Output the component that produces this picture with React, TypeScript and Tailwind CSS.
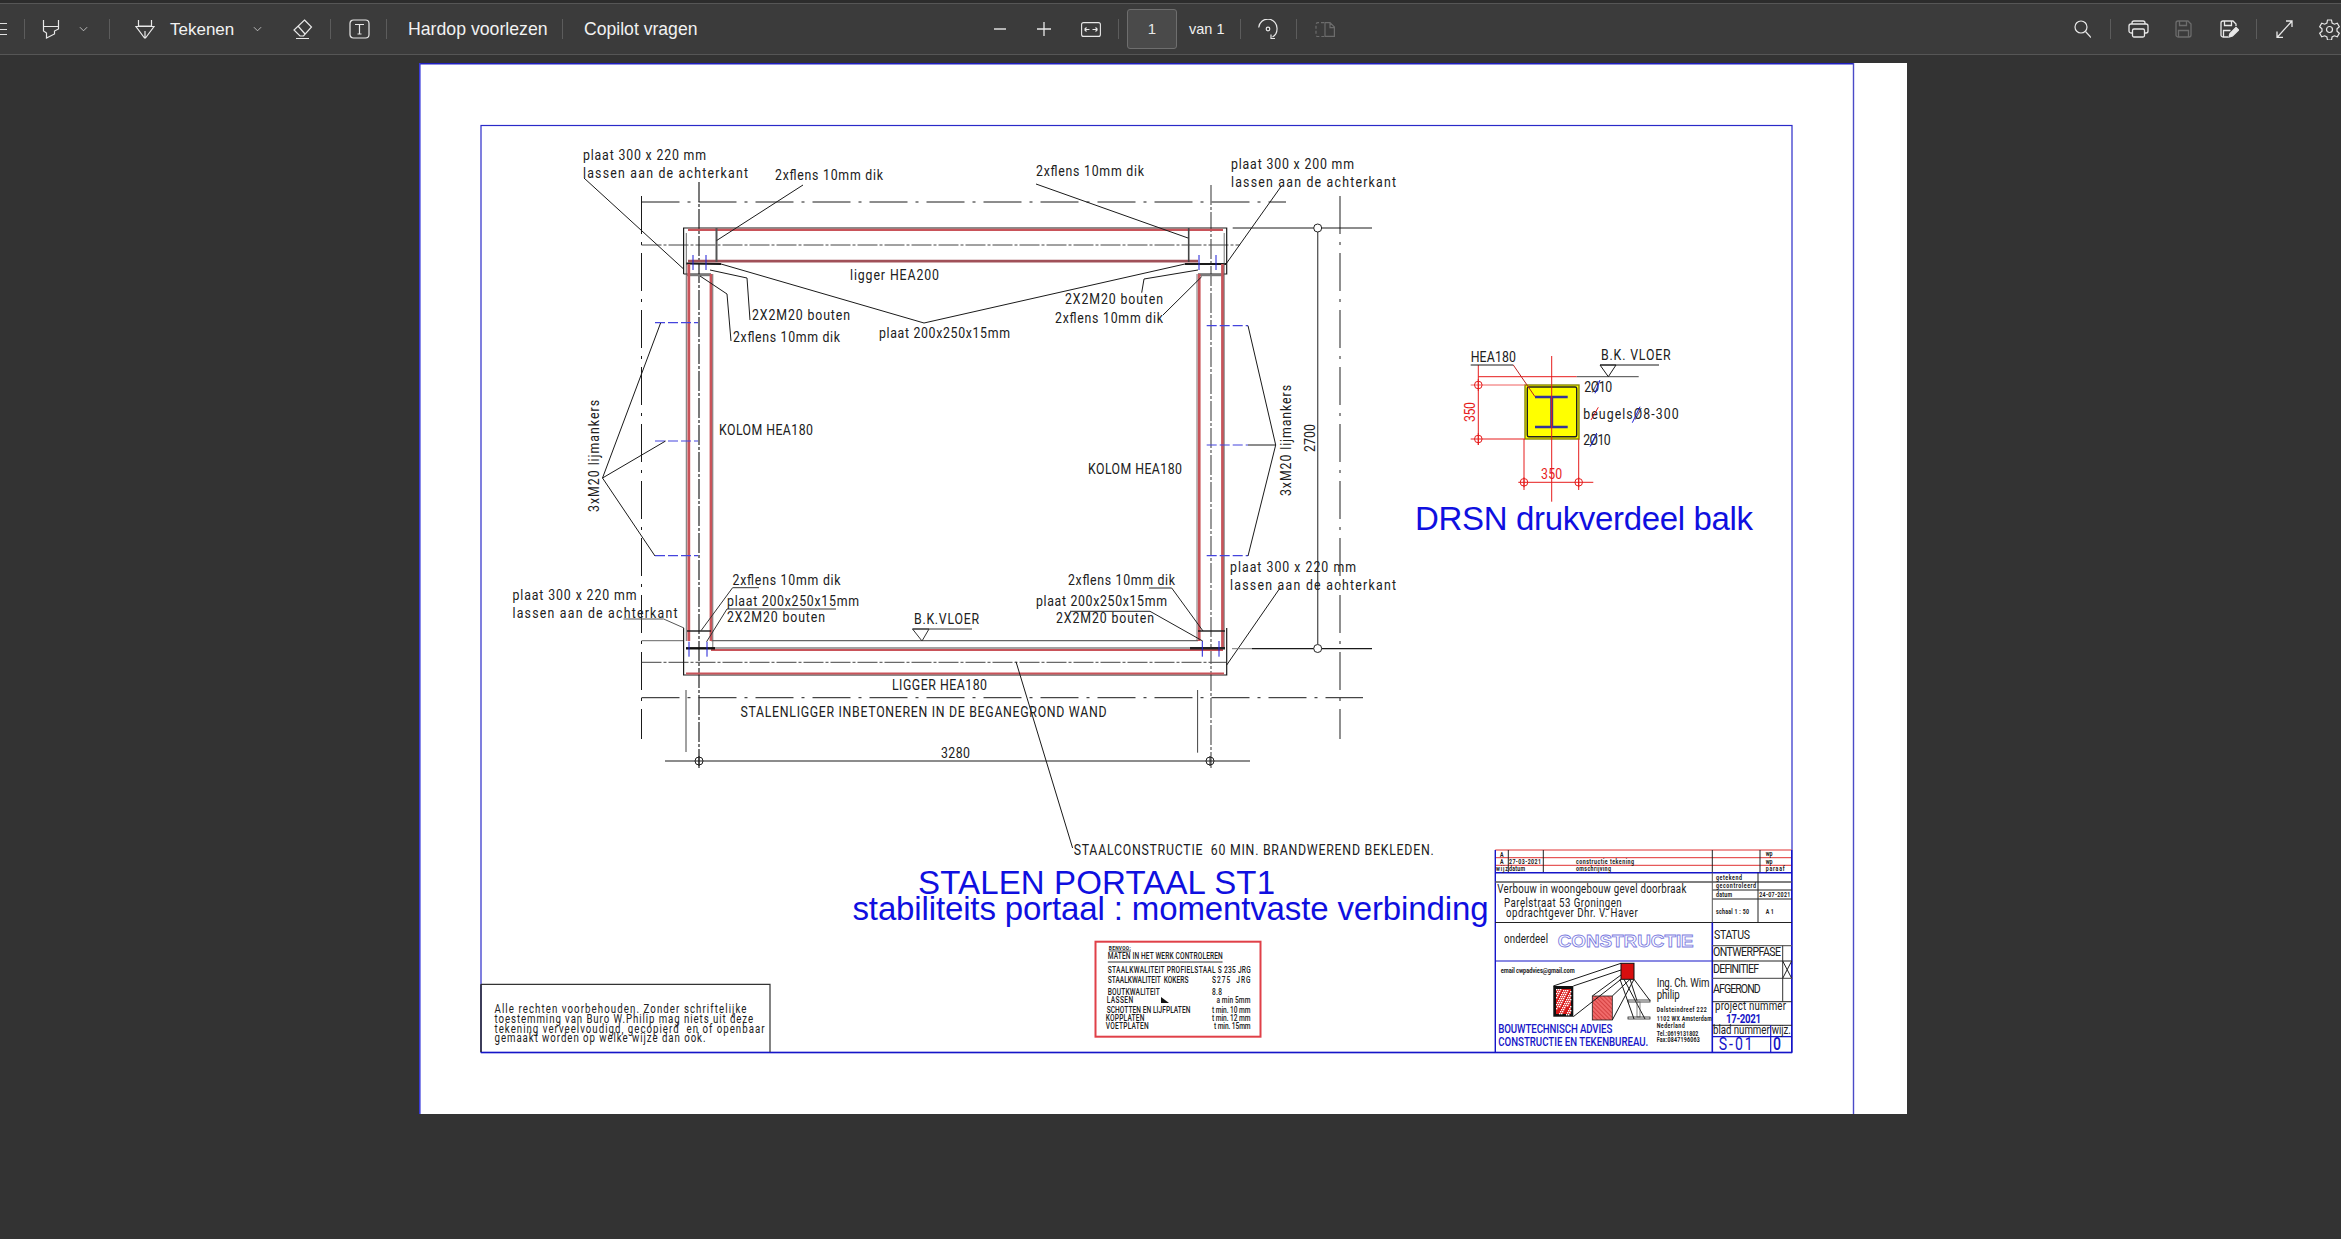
import React from "react";

const CAD = "Roboto, 'Liberation Sans', sans-serif";
const SX = 0.8;

type TP = { x: number; y: number; w?: number; s: string; size?: number; fill?: string; bold?: boolean; rot?: boolean; weight?: number; };
function T({ x, y, w, s, size = 14, fill = "#202020", bold, rot, weight }: TP) {
  return (
    <text
      x={0}
      y={0}
      transform={rot ? `translate(${x} ${y}) rotate(-90) scale(${SX} 1)` : `translate(${x} ${y}) scale(${SX} 1)`}
      textLength={w ? w / SX : undefined}
      lengthAdjust="spacing"
      fontFamily={CAD}
      fontSize={size * 1.1}
      fontWeight={weight ?? (bold ? 700 : 400)}
      fill={fill}
      xmlSpace="preserve"
    >
      {s}
    </text>
  );
}

function L({ p, c = "#1a1a1a", w = 1, d }: { p: string; c?: string; w?: number; d?: string }) {
  return <polyline points={p} fill="none" stroke={c} strokeWidth={w} strokeDasharray={d} />;
}

const RED = "#c9545a";
const BLUE = "#1d1dd6";
const DD = "38 8 3 8";
const CL = "20 2 3 2";

function Cross({ x, y, r = 4, c = "#222", v = 10 }: { x: number; y: number; r?: number; c?: string; v?: number }) {
  return (
    <g>
      <circle cx={x} cy={y} r={r} fill="none" stroke={c} strokeWidth={1} />
      <line x1={x} y1={y - v / 2} x2={x} y2={y + v / 2} stroke={c} strokeWidth={1} />
    </g>
  );
}

function Frame() {
  return (
    <g>
      {/* dash-dot grid */}
      <L p="641.5,202 1286,202" d={DD} />
      <L p="641.5,196 641.5,739" d={DD} />
      <L p="1340,196 1340,739" c="#555" w={1.3} d={DD} />
      <L p="641.5,697.7 1363,697.7" d={DD} />
      <L p="641.5,245 1240,245" c="#444" d={CL} />
      <L p="641.5,662.3 1226,662.3" c="#444" d={CL} />
      <L p="699,182 699,768" c="#222" w={1.2} d={CL} />
      <L p="1211,185 1211,768" c="#555" w={1.2} d={CL} />
      <L p="641.5,640.7 684,640.7" c="#666" />
      <L p="711,640.7 1198,640.7" c="#666" w={1.2} />

      {/* top beam */}
      <L p="683.6,274 683.6,228 1226.7,228 1226.7,274 1198,274" w={1.2} />
      <L p="683.6,274 711,274" w={1} />
      <L p="688,229.8 1223,229.8" c={RED} w={2.2} />
      <L p="688,261.2 1198,261.2" c="#a05058" w={2.8} />
      <L p="716.5,228 716.5,262" c="#555" w={2} />
      <L p="1188.7,228 1188.7,262" c="#444" w={1.6} />
      <L p="686,263.5 721,264" w={2} />
      <L p="1185,264 1226,264" w={2} />
      <L p="687,275.2 711,275.2" c="#777" w={2} />
      <L p="1198,275.2 1224,275.2" c="#777" w={2} />

      {/* columns */}
      <L p="686.3,233 686.3,641" c="#444" w={0.8} />
      <L p="688.8,264 688.8,641" c={RED} w={2.8} />
      <L p="711,274 711,641" c={RED} w={2.8} />
      <L p="712.8,274 712.8,648" c="#555" w={0.8} />
      <L p="1197,274 1197,641" c="#555" w={0.8} />
      <L p="1199.2,274 1199.2,641" c={RED} w={2.8} />
      <L p="1222.5,264 1222.5,649" c={RED} w={2.8} />
      <L p="1224.2,233 1224.2,649" c="#555" w={0.8} />

      {/* bottom beam */}
      <L p="683.6,628 683.6,675 1226.7,675 1226.7,628" w={1.2} />
      <L p="687,631 711,631" w={1.4} />
      <L p="1198,631 1225,631" w={1.4} />
      <L p="711,648 1190,648" c="#444" w={1.2} />
      <L p="711,650 1223,650" c={RED} w={2} />
      <L p="686,648.3 715,648.3" c="#111" w={2.4} />
      <L p="1190,648.3 1225,648.3" c="#222" w={2.4} />
      <L p="686,673.4 1224,673.4" c={RED} w={2} />

      {/* bolts */}
      <L p="693,255 693,270" c={BLUE} />
      <L p="706,255 706,270" c={BLUE} />
      <L p="1199,255 1199,270" c={BLUE} />
      <L p="1216,255 1216,270" c={BLUE} />
      <L p="689,641.7 689,656.7" c={BLUE} />
      <L p="707,641.7 707,656.7" c={BLUE} />
      <L p="1202.3,641 1202.3,656.7" c={BLUE} />
      <L p="1219,641 1219,656.7" c={BLUE} />

      {/* anchors */}
      <L p="655,322.7 698,322.7" c="#4444dd" w={1.2} d="10 3" />
      <L p="655,441 698,441" c="#4444dd" w={1.2} d="10 3" />
      <L p="655,555.7 698,555.7" c="#4444dd" w={1.2} d="10 3" />
      <L p="1206.7,325.7 1248,325.7" c="#4444dd" w={1.2} d="10 3" />
      <L p="1206.7,445 1248,445" c="#4444dd" w={1.2} d="10 3" />
      <L p="1206.7,555.7 1248,555.7" c="#4444dd" w={1.2} d="10 3" />
      <L p="660.6,323 602.5,478 665.6,441" />
      <L p="602.5,478 655,556" />
      <L p="1248,325.7 1275.7,445 1248,445" />
      <L p="1275.7,445 1248,556" />

      {/* leaders top */}
      <L p="584,178 683.6,269" />
      <L p="803,185 716.5,240.6" />
      <L p="721,264 924,323 1185,264" />
      <L p="710,270 747,278 750,320" />
      <L p="700,276 727,294 731,341" />
      <L p="1036,184 1188,238" />
      <L p="1280.7,187 1226,264" />
      <L p="1198,270 1144,279 1141.7,292.7" />
      <L p="1201.7,276.7 1163,315" />

      {/* leaders bottom */}
      <L p="623.5,619 663.7,619 684,628" c="#555" />
      <L p="759,587.7 732.6,587.7 701,630.7" c="#333" />
      <L p="836,609 727,609 706.6,641.7" c="#333" />
      <L p="1149,588 1171.7,588 1203,631" c="#222" />
      <L p="1070,611.3 1150,611.3 1202.7,641" c="#222" />
      <L p="1280,588 1226.7,665" />
      <L p="1016,661.7 1072.6,848" />

      {/* floor level */}
      <L p="912.5,629 972,629" c="#333" />
      <L p="912.5,629 929,629 922,641 912.5,629" c="#333" />

      {/* dimensions */}
      <L p="1232.7,228 1372,228" />
      <L p="1232,648.7 1252,648.7" c="#777" />
      <L p="1252,648.7 1372,648.7" w={1.2} />
      <L p="1317.7,232 1317.7,644" c="#555" w={1.3} />
      <circle cx={1317.7} cy={228} r={4} fill="white" stroke="#222" />
      <circle cx={1317.7} cy={648.5} r={4} fill="white" stroke="#222" />
      <L p="686,690 686,752" c="#444" />
      <L p="1197.6,690 1197.6,752.7" c="#444" />
      <L p="665,761 1250,761" w={1.2} />
      <Cross x={699} y={761} r={4} />
      <Cross x={1210} y={761} r={4} />

      <T x={583} y={160} w={123} s="plaat 300 x 220 mm" />
      <T x={583} y={178} w={165} s="lassen aan de achterkant" />
      <T x={775} y={180} w={108} s="2xflens 10mm dik" />
      <T x={1036} y={176} w={108} s="2xflens 10mm dik" />
      <T x={1231} y={169} w={123} s="plaat 300 x 200 mm" />
      <T x={1231} y={187} w={165} s="lassen aan de achterkant" />
      <T x={752} y={320} w={98} s="2X2M20 bouten" />
      <T x={733} y={342} w={107} s="2xflens 10mm dik" />
      <T x={850} y={280} w={89} s="ligger HEA200" />
      <T x={879} y={338} w={131} s="plaat 200x250x15mm" />
      <T x={719} y={435} w={94} s="KOLOM HEA180" />
      <T x={1065} y={304} w={98} s="2X2M20 bouten" />
      <T x={1055} y={323} w={108} s="2xflens 10mm dik" />
      <T x={1088} y={474} w={94} s="KOLOM HEA180" />
      <T x={598.6} y={512} w={112} s="3xM20 lijmankers" rot />
      <T x={1290.7} y={496} w={111} s="3xM20 lijmankers" rot />
      <T x={1315} y={452} w={28} s="2700" rot />
      <T x={512.5} y={600} w={124} s="plaat 300 x 220 mm" />
      <T x={512.5} y={618} w={165} s="lassen aan de achterkant" />
      <T x={732.6} y={585} w={108} s="2xflens 10mm dik" />
      <T x={727} y={605.7} w={132} s="plaat 200x250x15mm" />
      <T x={727} y={621.7} w={98} s="2X2M20 bouten" />
      <T x={1068} y={585} w={107} s="2xflens 10mm dik" />
      <T x={1036} y={606} w={131} s="plaat 200x250x15mm" />
      <T x={1056} y={623.3} w={98} s="2X2M20 bouten" />
      <T x={1230} y={572} w={126} s="plaat 300 x 220 mm" />
      <T x={1230} y={590} w={166} s="lassen aan de achterkant" />
      <T x={914} y={624} w={65} s="B.K.VLOER" />
      <T x={892} y={690} w={95} s="LIGGER HEA180" />
      <T x={740.5} y={717} w={366} s="STALENLIGGER INBETONEREN IN DE BEGANEGROND WAND" />
      <T x={941} y={758} w={29} s="3280" />
      <T x={1073.7} y={855} w={360} s="STAALCONSTRUCTIE  60 MIN. BRANDWEREND BEKLEDEN." />
    </g>
  );
}

function Section() {
  const R = "#e61c1c";
  return (
    <g>
      <rect x={1525} y={385} width={54} height={54} fill="#ffff00" stroke="#8a8a00" strokeWidth={1.4} />
      <rect x={1527.3} y={387} width={49.4} height={49.7} rx={1.5} fill="none" stroke="#222" strokeWidth={1.4} />
      <L p="1535,397 1567.7,397" c="#33339a" w={2.6} />
      <L p="1535,427 1567.7,427" c="#33339a" w={2.6} />
      <L p="1551.7,397 1551.7,427" c="#33339a" w={3} />
      <L p="1551.7,356 1551.7,501.7" c={R} />
      <L p="1470.7,385 1525,385" c="#f06060" />
      <L p="1470.7,439 1525,439" c={R} />
      <L p="1478.3,365 1478.3,445" c={R} />
      <L p="1478.3,376.7 1576.7,376.7" c={R} />
      <L p="1576.7,376.7 1638.7,376.7" c="#444" />
      <L p="1524,439 1524,490" c={R} />
      <L p="1578.7,439 1578.7,490" c={R} />
      <L p="1518.3,482.3 1593.3,482.3" c={R} />
      <Cross x={1478.3} y={385} c={R} r={3.8} v={12} />
      <Cross x={1478.3} y={439} c={R} r={3.8} v={12} />
      <Cross x={1524} y={482.3} c={R} r={3.8} v={10} />
      <Cross x={1578.7} y={482.3} c={R} r={3.8} v={10} />
      <L p="1470.7,365 1513.3,365" />
      <L p="1513.3,365 1535,396.7" c="#b22" />
      <L p="1600,365 1659,365" />
      <L p="1600,365 1616,365 1608.3,376.7 1600,365" />
      <T x={1470.7} y={362} w={45.3} s="HEA180" />
      <T x={1601} y={360} w={69.7} s="B.K. VLOER" />
      <T x={1584.3} y={391.7} w={28} s="2Ø10" />
      <T x={1583.3} y={419} w={95.3} s="beugelsØ8-300" />
      <T x={1583.3} y={445} w={27.4} s="2Ø10" />
      <L p="1595,393.3 1600,380" c={BLUE} />
      <L p="1591,420 1598.3,407.3" c={R} />
      <L p="1632.3,422.7 1640,406.7" c={BLUE} />
      <L p="1590,446.7 1596.7,433" c={BLUE} />
      <T x={1475.3} y={422} w={20} s="350" rot fill={R} />
      <T x={1541} y={479} w={21.3} s="350" fill={R} />
      <text x={1415} y={530} textLength={338} fontFamily="'Liberation Sans', sans-serif" fontSize={33} fill="#0f0fe0">DRSN drukverdeel balk</text>
      <text x={918} y={894} textLength={357} fontFamily="'Liberation Sans', sans-serif" fontSize={33} fill="#0f0fe0">STALEN PORTAAL ST1</text>
      <text x={852.5} y={920} textLength={636} fontFamily="'Liberation Sans', sans-serif" fontSize={33} fill="#0f0fe0">stabiliteits portaal : momentvaste verbinding</text>
    </g>
  );
}

function Notes() {
  const rows: [number, number, number, string][] = [
    [1107.8, 972.7, 143, "STAALKWALITEIT PROFIELSTAAL S 235 JRG"],
    [1107.8, 983.3, 80.6, "STAALKWALITEIT  KOKERS"],
    [1212, 983.3, 38.6, "S275  JRG"],
    [1107.8, 995, 52, "BOUTKWALITEIT"],
    [1212, 995, 10, "8.8"],
    [1106.7, 1003.3, 26.5, "LASSEN"],
    [1216.4, 1003.3, 34, "a min 5mm"],
    [1106.7, 1013.3, 83.7, "SCHOTTEN EN LIJFPLATEN"],
    [1212, 1013.3, 38.6, "t min. 10 mm"],
    [1105.7, 1021.3, 38.8, "KOPPLATEN"],
    [1212, 1021.3, 38.6, "t min. 12 mm"],
    [1105.7, 1029.3, 43, "VOETPLATEN"],
    [1214, 1029.3, 36.6, "t min. 15mm"],
  ];
  return (
    <g>
      <rect x={1095.5} y={941.7} width={165} height={95} fill="none" stroke="#e04048" strokeWidth={2} />
      <T x={1108.8} y={949.7} w={22} s="BENVOO:" size={5.5} bold />
      <L p="1108.8,951 1131,951" w={0.8} />
      <T x={1107.8} y={959.3} w={115} s="MATEN IN HET WERK CONTROLEREN" size={7.5} weight={500} />
      <L p="1107.8,962 1222.6,962" c="#333" />
      {rows.map((r, i) => (
        <T key={i} x={r[0]} y={r[1]} w={r[2]} s={r[3]} size={7.5} weight={500} />
      ))}
      <polygon points="1161,997 1169,1003 1161,1003" fill="#111" />

      <L p="481,984.3 770,984.3 770,1052" c="#333" w={1.2} />
      <L p="481,984.3 481,1052" c="#222" w={1.4} />
      <T x={494.5} y={1013.3} w={252} s="Alle rechten voorbehouden. Zonder schriftelijke" size={11} />
      <T x={494.5} y={1023.3} w={258.6} s="toestemming van Buro W.Philip mag niets uit deze" size={11} />
      <T x={494.5} y={1032.7} w={270} s="tekening verveelvoudigd, gecopierd  en of openbaar" size={11} />
      <T x={494.5} y={1041.7} w={211} s="gemaakt worden op welke wijze dan ook." size={11} />
    </g>
  );
}

function TitleBlock() {
  const dots: [number, number][] = [];
  for (let i = 0; i < 70; i++) {
    dots.push([1556 + ((i * 37) % 15), 989 + ((i * 53) % 26)]);
  }
  const BB = "#1515c8";
  return (
    <g>
      <defs>
        <pattern id="hatch" width="3" height="3" patternUnits="userSpaceOnUse" patternTransform="rotate(-45)">
          <rect width="3" height="3" fill="#f06a6a" />
          <line x1="0" y1="0" x2="0" y2="3" stroke="#b81818" strokeWidth="1" />
        </pattern>
      </defs>
      <L p="1495.3,857.7 1791.7,857.7" c="#e03030" />
      <L p="1495.3,865.3 1791.7,865.3" c="#e03030" />
      <L p="1495.3,850 1791.7,850" c="#e03030" />
      <L p="1495.3,850 1495.3,1052" c={BB} w={1.4} />
      <L p="1791.7,850 1791.7,1052" c={BB} w={1.4} />
      {[1508.3, 1543.3, 1712.3, 1760].map((x) => (
        <L key={x} p={`${x},850 ${x},872.7`} c="#222" />
      ))}
      <L p="1495.3,872.7 1791.7,872.7" c={BB} w={1.6} />
      <L p="1495.3,882 1791.7,882" c="#555" w={1.4} />
      <L p="1712.3,890 1791.7,890" c="#222" />
      <L p="1712.3,899 1791.7,899" c="#222" />
      <L p="1495.3,922.5 1791.7,922.5" c="#222" w={1.2} />
      <L p="1712.3,872.7 1712.3,922.5" c="#555" />
      <L p="1758,872.7 1758,922.5" c="#222" />

      <T x={1500} y={856.7} s="A" size={6} bold />
      <T x={1500} y={864} s="A" size={6} bold />
      <T x={1509} y={864} w={32} s="27-03-2021" size={6} bold />
      <T x={1576} y={864} w={58} s="constructie tekening" size={6} bold />
      <T x={1496} y={871} w={12} s="wijz" size={6} bold />
      <T x={1509} y={871} w={16} s="datum" size={6} bold />
      <T x={1576} y={871} w={35} s="omschrijving" size={6} bold />
      <T x={1765.7} y={856} s="wp" size={6} bold />
      <T x={1765.7} y={863.7} s="wp" size={6} bold />
      <T x={1765.7} y={871} w={19} s="paraaf" size={6} bold />

      <T x={1716} y={880} w={26} s="getekend" size={6} bold />
      <T x={1716} y={888} w={40} s="gecontroleerd" size={6} bold />
      <T x={1716} y={896.7} w={16} s="datum" size={6} bold />
      <T x={1759.3} y={896.7} w={31} s="24-07-2021" size={6} bold />
      <T x={1716} y={914} w={33} s="schaal 1 : 50" size={6} bold />
      <T x={1765.7} y={914} w={8} s="A 1" size={6} bold />

      <T x={1497.3} y={893.3} w={189} s="Verbouw in woongebouw gevel doorbraak" size={11} />
      <T x={1504} y={906.7} w={117.7} s="Parelstraat 53 Groningen" size={11} />
      <T x={1506} y={917.3} w={131.7} s="opdrachtgever Dhr. V. Haver" size={11} />
      <T x={1504} y={942.7} w={44} s="onderdeel" size={11} />
      <text x={1557.7} y={947.3} textLength={136} lengthAdjust="spacingAndGlyphs" fontFamily="'Liberation Sans', sans-serif" fontWeight={700} fontSize={17} fill="white" stroke="#7a7ae0" strokeWidth={0.8}>CONSTRUCTIE</text>
      <L p="1495.3,961 1712.3,961" c={BB} w={1.2} />

      <L p="1712.3,922.5 1712.3,1052" c={BB} w={1.6} />
      <L p="1712.3,945.7 1791.7,945.7" c="#666" w={1.2} />
      <L p="1712.3,961 1791.7,961" c="#222" />
      <L p="1712.3,978.3 1791.7,978.3" c="#666" w={1.2} />
      <L p="1712.3,1001.7 1791.7,1001.7" c="#222" />
      <L p="1782.7,945.7 1782.7,1001.7" c="#333" />
      <L p="1782.7,961 1791.7,978.3" c="#222" />
      <L p="1791.7,961 1782.7,978.3" c="#222" />
      <L p="1712.3,1025.3 1791.7,1025.3" c="#222" />
      <L p="1712.3,1036.7 1791.7,1036.7" c={BB} w={1.2} />
      <L p="1770.7,1025.3 1770.7,1052" c={BB} w={1.2} />

      <T x={1714} y={939} w={36} s="STATUS" size={12} />
      <T x={1713} y={955.7} w={68} s="ONTWERPFASE" size={12} />
      <T x={1713} y={972.7} w={46} s="DEFINITIEF" size={12} />
      <T x={1713} y={993.3} w={47.7} s="AFGEROND" size={12} />
      <T x={1715} y={1010} w={71} s="project nummer" size={11} />
      <T x={1726} y={1022.7} w={35} s="17-2021" size={11} fill={BB} bold />
      <T x={1713} y={1033.7} w={56.7} s="blad nummer" size={11} />
      <T x={1771.7} y={1033.7} w={19} s="wijz." size={11} />
      <T x={1718.7} y={1050} w={34} s="S-01" size={16} fill={BB} weight={400} />
      <T x={1773} y={1050} s="0" size={16} fill={BB} weight={500} />

      <T x={1500.7} y={972.7} w={74} s="email cwpadvies@gmail.com" size={6.5} bold />
      <rect x={1553.3} y={986} width={20} height={30.7} fill="#111" />
      <rect x={1556} y={989} width={15} height={25} fill="#d81a1a" />
      {dots.map((d, i) => (
        <rect key={i} x={d[0]} y={d[1]} width={1.4} height={1.4} fill="white" />
      ))}
      <rect x={1592.3} y={996} width={20} height={24} fill="url(#hatch)" stroke="#222" strokeWidth={0.8} />
      <rect x={1621} y={963.3} width={13} height={16} fill="#d80f0f" stroke="#111" />
      <L p="1553.3,986 1621,963.3" />
      <L p="1573.3,986 1621,970" />
      <L p="1573.3,1016.7 1621,979.3" />
      <L p="1592.3,996 1621,975" />
      <L p="1612.3,996 1630,979.3" />
      <L p="1612.3,1020 1634,979.3" />
      <L p="1624,979.3 1645,1019" />
      <L p="1634,979.3 1650,1000.7" />
      <L p="1630,979.3 1637,1000.7" />
      <L p="1620,979.3 1634,1019" />
      <rect x={1628} y={1000} width={22} height={2} fill="none" stroke="#222" strokeWidth={0.8} />
      <rect x={1637} y={1002} width={3} height={15} fill="none" stroke="#666" strokeWidth={0.8} />
      <rect x={1628} y={1017} width={22} height={2} fill="none" stroke="#222" strokeWidth={0.8} />

      <T x={1656.7} y={986.7} w={52.7} s="Ing. Ch. Wim" size={11} />
      <T x={1656.7} y={999} w={23} s="philip" size={11} />
      <T x={1656.7} y={1011.7} w={50} s="Dalsteindreef 222" size={6} bold />
      <T x={1656.7} y={1020.7} w={55} s="1102 WX Amsterdam" size={6} bold />
      <T x={1656.7} y={1028} w={28} s="Nederland" size={6} bold />
      <T x={1656.7} y={1035.7} w={41.7} s="Tel.:0619131802" size={6} bold />
      <T x={1656.7} y={1042.3} w={43} s="Fax:0847196063" size={6} bold />
      <T x={1498.3} y={1033.3} w={114} s="BOUWTECHNISCH ADVIES" size={11} fill={BB} weight={500} />
      <T x={1498.3} y={1046} w={150} s="CONSTRUCTIE EN TEKENBUREAU." size={11} fill={BB} weight={500} />
    </g>
  );
}

function Drawing() {
  return (
    <svg viewBox="419 63 1488 1051" className="block w-[1488px] h-[1051px]">
      <L p="419,63.8 1853.5,63.8" c="#2020c0" w={1.6} />
      <L p="419.8,63 419.8,1114" c="#3a3ad8" w={1.6} />
      <L p="1853.5,63 1853.5,1114" c="#4a4ac8" w={1.4} />
      <rect x={481} y={125.5} width={1311} height={927} fill="none" stroke="#2a2ac8" strokeWidth={1.2} />
      <L p="481,1052.5 1792,1052.5" c="#1515c8" w={1.6} />
      <Frame />
      <Section />
      <Notes />
      <TitleBlock />
    </svg>
  );
}

const ic = "#e8e8e8";
const Div = ({ cls }: { cls: string }) => <div className={`w-px h-[20px] bg-[#5c5c5c] shrink-0 ${cls}`} />;

function Chevron({ cls }: { cls: string }) {
  return (
    <svg viewBox="0 0 10 6" className={`w-[9px] h-[6px] shrink-0 ${cls}`} fill="none" stroke="#c8c8c8" strokeWidth={1}>
      <path d="M1 1l4 4 4-4" />
    </svg>
  );
}

const NAME = "whitespace-nowrap text-[#f2f2f2] leading-none shrink-0";

export default function App() {
  return (
    <div className="w-full h-[1239px] bg-[#333333] overflow-hidden font-['Liberation_Sans',sans-serif]">
      <div className="h-[3px] bg-[#2c2c2c]" />
      <div className="h-[52px] bg-[#3b3b3b] border-y border-[#565656] flex items-center overflow-hidden">
        <div className="w-[7px] h-[12px] flex flex-col justify-between shrink-0">
          <div className="h-px bg-[#e0e0e0]" />
          <div className="h-px bg-[#e0e0e0]" />
          <div className="h-px bg-[#e0e0e0]" />
        </div>
        <Div cls="ml-[17px]" />
        <svg viewBox="0 0 20 20" className="ml-[16px] w-[20px] h-[20px] shrink-0" fill="none" stroke={ic} strokeWidth={1.2}>
          <path d="M2.5 1v6.5h15V1M2.5 7.5v4.5l3 2v5l8-4v-3l4-2V7.5" />
        </svg>
        <Chevron cls="ml-[18px]" />
        <Div cls="ml-[21px]" />
        <svg viewBox="0 0 20 20" className="ml-[25px] w-[20px] h-[20px] shrink-0" fill="none" stroke={ic} strokeWidth={1.2}>
          <path d="M3.5 1v6h13V1M1 7.5h18L10.5 19h-1zM10 12v7" />
        </svg>
        <span className={`ml-[15px] w-[64px] text-[17px] ${NAME}`}>Tekenen</span>
        <Chevron cls="ml-[19px]" />
        <svg viewBox="0 0 21 20" className="ml-[30px] w-[21px] h-[20px] shrink-0" fill="none" stroke={ic} strokeWidth={1.2}>
          <path d="M12.5 1l7 7-8 9H8L2 11zM6 7l7 8M4 19.5h13" />
        </svg>
        <Div cls="ml-[17px]" />
        <svg viewBox="0 0 21 20" className="ml-[18px] w-[21px] h-[20px] shrink-0" fill="none" stroke={ic} strokeWidth={1.2}>
          <rect x="1" y="1" width="19" height="18" rx="3.5" />
          <path d="M6 5.5h9M10.5 5.5v9.5M8.5 15h4" />
        </svg>
        <Div cls="ml-[16px]" />
        <span className={`ml-[21px] mt-[2px] w-[138px] text-[17.7px] ${NAME}`}>Hardop voorlezen</span>
        <Div cls="ml-[16px]" />
        <span className={`ml-[21px] mt-[2px] w-[113px] text-[17.6px] ${NAME}`}>Copilot vragen</span>

        <div className="ml-[297px] w-[12px] h-[1.5px] bg-[#b4b4b4] shrink-0" />
        <svg viewBox="0 0 14 14" className="ml-[31px] w-[14px] h-[14px] shrink-0" stroke={ic} strokeWidth={1.3}>
          <path d="M0 7h14M7 0v14" />
        </svg>
        <svg viewBox="0 0 20 15" className="ml-[30px] w-[20px] h-[15px] shrink-0" fill="none" stroke={ic} strokeWidth={1.1}>
          <rect x="0.6" y="0.6" width="18.8" height="13.8" rx="2" />
          <path d="M3.5 7.5h5M3.5 7.5l2-2M3.5 7.5l2 2M16.5 7.5h-5M16.5 7.5l-2-2M16.5 7.5l-2 2" />
        </svg>
        <Div cls="ml-[17px]" />
        <div className="ml-[8px] w-[50px] h-[40px] rounded-[3px] border border-[#6e6e6e] bg-[#4a4a4a] flex items-center justify-center text-[#e8e8e8] text-[15px] shrink-0">1</div>
        <span className="ml-[12px] w-[34px] whitespace-nowrap text-[#f0f0f0] text-[14.5px] leading-none shrink-0">van 1</span>
        <Div cls="ml-[17px]" />
        <svg viewBox="0 0 20 20" className="ml-[17px] w-[20px] h-[20px] shrink-0" fill="none" stroke={ic} strokeWidth={1.2}>
          <path d="M0.7 8.5A9 9 0 0 1 19 10a9 9 0 0 1-4.5 8M13 15.5v4h4" />
          <circle cx="10" cy="10" r="1.8" />
        </svg>
        <Div cls="ml-[18px]" />
        <svg viewBox="0 0 20 15" className="ml-[18px] w-[20px] h-[15px] shrink-0" fill="none" stroke="#6c6c6c" strokeWidth={1.2}>
          <path d="M9 0.6H3a2 2 0 0 0-2 2v10a2 2 0 0 0 2 2h6" strokeDasharray="3 2" />
          <path d="M10 0.6h5l4.4 4.4v9.4H10zM15 0.6v5h4.4" />
        </svg>

        <svg viewBox="0 0 17 18" className="ml-[739px] w-[17px] h-[18px] shrink-0" fill="none" stroke={ic} strokeWidth={1.2}>
          <circle cx="7" cy="7" r="6" />
          <path d="M11.5 11.5L17 17.5" />
        </svg>
        <Div cls="ml-[19px]" />
        <svg viewBox="0 0 21 18" className="ml-[17px] w-[21px] h-[18px] shrink-0" fill="none" stroke={ic} strokeWidth={1.3}>
          <path d="M4 4V3a2 2 0 0 1 2-2h9a2 2 0 0 1 2 2v1M4.5 13H3a2 2 0 0 1-2-2V6a2 2 0 0 1 2-2h15a2 2 0 0 1 2 2v5a2 2 0 0 1-2 2h-1.5" />
          <rect x="4.5" y="9" width="12" height="8" rx="1.5" />
        </svg>
        <svg viewBox="0 0 17 18" className="ml-[26px] w-[17px] h-[18px] shrink-0" fill="none" stroke="#6c6c6c" strokeWidth={1.3}>
          <path d="M1 3a2 2 0 0 1 2-2h10l3 3v11a2 2 0 0 1-2 2H3a2 2 0 0 1-2-2zM4.5 1v4.5h7V1M3.5 17v-6.5h10V17" />
        </svg>
        <svg viewBox="0 0 19 18" className="ml-[28px] w-[19px] h-[18px] shrink-0" fill="none" stroke={ic} strokeWidth={1.3}>
          <path d="M8 17H3a2 2 0 0 1-2-2V3a2 2 0 0 1 2-2h10l3 3v2M4.5 1v4.5h7V1M3.5 17v-6.5h7" />
          <path d="M9 17l1-3.5 6-6 2.5 2.5-6 6z" fill={ic} />
        </svg>
        <Div cls="ml-[17px]" />
        <svg viewBox="0 0 17 18" className="ml-[19px] w-[17px] h-[18px] shrink-0" fill="none" stroke={ic} strokeWidth={1.3}>
          <path d="M1 17.5L16 1M10 1h6v6M1 11.5v6h6" />
        </svg>
        <svg viewBox="0 0 21 21" className="ml-[26px] w-[21px] h-[21px] shrink-0" fill="none" stroke={ic} strokeWidth={1.2}>
          <path d="M8.5 1h4l.6 3 2.2 1.2 3-1 2 3.5-2.3 2v2.600l2.3 2-2 3.500-3-1-2.200 1.200-.6 3h-4l-.6-3-2.200-1.200-3 1-2-3.500 2.300-2v-2.600l-2.300-2 2-3.500 3 1 2.200-1.200z" />
          <circle cx="10.5" cy="10.5" r="3" />
        </svg>
      </div>
      <main className="pt-[8px] pl-[419px]">
        <div className="w-[1488px] h-[1051px] bg-white">
          <Drawing />
        </div>
      </main>
    </div>
  );
}
